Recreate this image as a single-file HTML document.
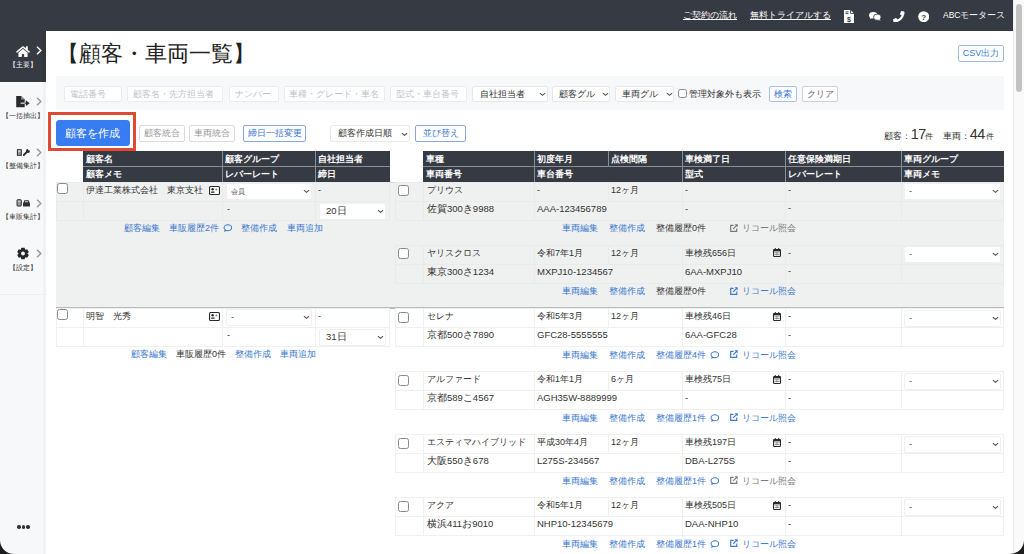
<!DOCTYPE html><html><head><meta charset="utf-8"><style>
html,body{margin:0;padding:0;width:1024px;height:554px;overflow:hidden;background:#fff;font-family:"Liberation Sans",sans-serif;}
#root{position:relative;width:1024px;height:554px;overflow:hidden}
</style></head><body><div id="root">
<div style="position:absolute;left:0px;top:0px;width:1013px;height:31px;background:#363a43"></div>
<div style="position:absolute;left:0px;top:31px;width:46px;height:50.5px;background:#363a43"></div>
<div style="position:absolute;left:42px;top:31px;width:4px;height:50.5px;background:#33373b"></div>
<div style="position:absolute;left:0px;top:81.5px;width:46px;height:473px;background:#f7f8fa"></div>
<div style="position:absolute;left:43px;top:81.5px;width:3px;height:473px;background:#f1f2f5"></div>
<div style="position:absolute;left:1013px;top:0px;width:11px;height:554px;background:#fafafa;border-left:1px solid #ececec;box-sizing:border-box"></div>
<div style="position:absolute;left:1016px;top:4px;width:6px;height:88px;background:#c2c2c2;border-radius:3px"></div>
<div style="position:absolute;left:683px;top:9.00px;height:13px;line-height:13px;font-size:9px;color:#fff;white-space:nowrap;text-decoration:underline">ご契約の流れ</div>
<div style="position:absolute;left:750px;top:9.00px;height:13px;line-height:13px;font-size:9px;color:#fff;white-space:nowrap;text-decoration:underline">無料トライアルする</div>
<svg style="position:absolute;left:844px;top:10px" width="10" height="13" viewBox="0 0 10 13"><path d="M0 0 H6.5 L10 3.5 V13 H0 Z" fill="#fff"/><path d="M6.5 0 V3.5 H10" fill="none" stroke="#363a43" stroke-width="0.8"/><rect x="1.5" y="1.5" width="3" height="0.9" fill="#363a43"/><rect x="1.5" y="3.2" width="3" height="0.9" fill="#363a43"/><text x="5" y="11.5" font-size="7" font-weight="bold" text-anchor="middle" fill="#363a43" font-family="Liberation Sans">$</text></svg>
<svg style="position:absolute;left:869px;top:12.2px" width="12" height="8.6" viewBox="0 0 13 9.3"><ellipse cx="4.6" cy="3.6" rx="4.5" ry="3.5" fill="#fff"/><path d="M1.5 5.5 L0.8 7.6 L3.5 6.6Z" fill="#fff"/><ellipse cx="9" cy="5.6" rx="4.1" ry="3.4" fill="#fff" stroke="#363a43" stroke-width="0.9"/><path d="M11 7.5 L12.8 9.2 L9.5 8.6Z" fill="#fff"/></svg>
<svg style="position:absolute;left:893px;top:10.8px" width="11.5" height="11.5" viewBox="0 0 512 512"><path fill="#fff" d="M497.4 361.8l-112-48a24 24 0 0 0-28 6.9l-49.6 60.6A370.7 370.7 0 0 1 130.6 204.1l60.6-49.6a23.9 23.9 0 0 0 6.9-28l-48-112A24.2 24.2 0 0 0 122.6.6l-104 24A24 24 0 0 0 0 48c0 256.5 207.9 464 464 464a24 24 0 0 0 23.4-18.6l24-104a24.3 24.3 0 0 0-14-27.6z" transform="translate(512,0) scale(-1,1)"/></svg>
<svg style="position:absolute;left:917.6px;top:10.6px" width="11.4" height="11.4" viewBox="0 0 12 12"><circle cx="6" cy="6" r="5.8" fill="#fff"/><text x="6" y="9" font-size="8.5" font-weight="bold" text-anchor="middle" fill="#363a43" font-family="Liberation Sans">?</text></svg>
<div style="position:absolute;left:943px;top:9.25px;height:12.5px;line-height:12.5px;font-size:8.5px;color:#fff;white-space:nowrap;">ABCモータース</div>
<svg style="position:absolute;left:16px;top:46px" width="14" height="11" viewBox="0 0 576 460"><path fill="#fff" d="M280.4 148.3L96 300.1V464a16 16 0 0 0 16 16l112.1-.3a16 16 0 0 0 15.9-16V368a16 16 0 0 1 16-16h64a16 16 0 0 1 16 16v95.6a16 16 0 0 0 16 16l112.1.3a16 16 0 0 0 16-16V300L295.7 148.3a12.2 12.2 0 0 0-15.3 0zM571.6 251.5L488 182.6V44.1a12 12 0 0 0-12-12h-56a12 12 0 0 0-12 12v72.6L318.5 43a48 48 0 0 0-61 0L4.3 251.5a12 12 0 0 0-1.6 16.9l25.5 31A12 12 0 0 0 45.2 301l235.2-193.7a12.2 12.2 0 0 1 15.3 0L530.9 301a12 12 0 0 0 16.9-1.6l25.5-31a12 12 0 0 0-1.7-16.9z" transform="translate(0,-20)"/></svg>
<svg style="position:absolute;left:36.3px;top:46.4px" width="6" height="9" viewBox="0 0 6 9"><path d="M1 0.8 L4.8 4.5 L1 8.2" fill="none" stroke="#fff" stroke-width="1.45"/></svg>
<div style="position:absolute;left:0;top:58.8px;width:46px;text-align:center;line-height:11px;font-size:7.3px;color:#fff;white-space:nowrap;letter-spacing:-0.1px">【主要】</div>
<svg style="position:absolute;left:12px;top:92px" width="20" height="18" viewBox="0 0 20 18"><path d="M4.2 3.9 H9.2 L12.7 7.4 V15.3 H4.2 Z" fill="#2a2a2a"/><path d="M9.2 3.9 V7.4 H12.7Z" fill="#999"/><rect x="8.6" y="10.6" width="4.4" height="1.1" fill="#f7f8fa"/><rect x="12.7" y="10.6" width="1.4" height="1.1" fill="#2a2a2a"/><path d="M13.8 8.3 L17.7 11.15 L13.8 14 Z" fill="#2a2a2a"/></svg>
<svg style="position:absolute;left:36.3px;top:97.4px" width="6" height="9" viewBox="0 0 6 9"><path d="M1 0.8 L4.8 4.5 L1 8.2" fill="none" stroke="#9a9a9a" stroke-width="1.45"/></svg>
<div style="position:absolute;left:0;top:109.8px;width:46px;text-align:center;line-height:11px;font-size:7.3px;color:#333;white-space:nowrap;letter-spacing:-0.1px">【一括抽出】</div>
<svg style="position:absolute;left:12px;top:144px" width="20" height="18" viewBox="0 0 20 18"><rect x="5.4" y="5.7" width="3.9" height="5.6" fill="#999" stroke="#2a2a2a" stroke-width="1"/><rect x="6.2" y="6.6" width="2.3" height="0.9" fill="#fff"/><path d="M11.8 11 L15.2 7.6" stroke="#2a2a2a" stroke-width="1.8" stroke-linecap="round"/><circle cx="15.9" cy="6.9" r="2" fill="#2a2a2a"/><circle cx="17" cy="5.6" r="1" fill="#f7f8fa"/></svg>
<svg style="position:absolute;left:36.3px;top:147.9px" width="6" height="9" viewBox="0 0 6 9"><path d="M1 0.8 L4.8 4.5 L1 8.2" fill="none" stroke="#9a9a9a" stroke-width="1.45"/></svg>
<div style="position:absolute;left:0;top:160.3px;width:46px;text-align:center;line-height:11px;font-size:7.3px;color:#333;white-space:nowrap;letter-spacing:-0.1px">【整備集計】</div>
<svg style="position:absolute;left:12px;top:195px" width="20" height="18" viewBox="0 0 20 18"><rect x="5" y="4.7" width="4.3" height="6.4" rx="0.6" fill="#999" stroke="#333" stroke-width="1"/><rect x="6" y="5.8" width="2.3" height="1" fill="#ddd"/><path d="M11 8.6 L12.4 5.3 H16.6 L18 8.6 V11.4 H11 Z" fill="#2f2f2f"/><rect x="12.9" y="6" width="3.2" height="1.4" fill="#aaa"/></svg>
<svg style="position:absolute;left:36.3px;top:198.9px" width="6" height="9" viewBox="0 0 6 9"><path d="M1 0.8 L4.8 4.5 L1 8.2" fill="none" stroke="#9a9a9a" stroke-width="1.45"/></svg>
<div style="position:absolute;left:0;top:211.3px;width:46px;text-align:center;line-height:11px;font-size:7.3px;color:#333;white-space:nowrap;letter-spacing:-0.1px">【車販集計】</div>
<svg style="position:absolute;left:12px;top:245px" width="20" height="18" viewBox="0 0 20 18"><path d="M9.35 2.73 L12.65 2.73 L13.20 4.69 L15.17 4.18 L16.82 7.05 L15.40 8.50 L16.82 9.95 L15.17 12.82 L13.20 12.31 L12.65 14.27 L9.35 14.27 L8.80 12.31 L6.83 12.82 L5.18 9.95 L6.60 8.50 L5.18 7.05 L6.83 4.18 L8.80 4.69 Z" fill="#262626"/><circle cx="11" cy="8.5" r="1.9" fill="#f7f8fa"/></svg>
<svg style="position:absolute;left:36.3px;top:249.4px" width="6" height="9" viewBox="0 0 6 9"><path d="M1 0.8 L4.8 4.5 L1 8.2" fill="none" stroke="#9a9a9a" stroke-width="1.45"/></svg>
<div style="position:absolute;left:0;top:261.8px;width:46px;text-align:center;line-height:11px;font-size:7.3px;color:#333;white-space:nowrap;letter-spacing:-0.1px">【設定】</div>
<div style="position:absolute;left:0px;top:293.5px;width:46px;height:1px;background:#eceef1"></div>
<div style="position:absolute;left:17.0px;top:525px;width:3.6px;height:3.6px;background:#333;border-radius:50%"></div>
<div style="position:absolute;left:21.5px;top:525px;width:3.6px;height:3.6px;background:#333;border-radius:50%"></div>
<div style="position:absolute;left:26.0px;top:525px;width:3.6px;height:3.6px;background:#333;border-radius:50%"></div>
<div style="position:absolute;left:57px;top:41.00px;height:26px;line-height:26px;font-size:22px;color:#222;white-space:nowrap;">【顧客・車両一覧】</div>
<div style="position:absolute;left:958px;top:45px;width:46px;height:16.5px;background:#fff;border:1px solid #9fbde3;box-sizing:border-box;border-radius:2px;text-align:center;line-height:14.5px;font-size:9px;color:#3b78cf;white-space:nowrap;">CSV出力</div>
<div style="position:absolute;left:56px;top:76px;width:948px;height:34px;background:#f7f8fa"></div>
<div style="position:absolute;left:64px;top:86px;width:58px;height:16px;background:#fff;border:1px solid #eaecef;box-sizing:border-box;border-radius:2px"><div style="position:absolute;left:4.5px;top:0;line-height:14px;font-size:9px;color:#bfc3c9;white-space:nowrap">電話番号</div></div>
<div style="position:absolute;left:127px;top:86px;width:96px;height:16px;background:#fff;border:1px solid #eaecef;box-sizing:border-box;border-radius:2px"><div style="position:absolute;left:4.5px;top:0;line-height:14px;font-size:9px;color:#bfc3c9;white-space:nowrap">顧客名・先方担当者</div></div>
<div style="position:absolute;left:229px;top:86px;width:50px;height:16px;background:#fff;border:1px solid #eaecef;box-sizing:border-box;border-radius:2px"><div style="position:absolute;left:4.5px;top:0;line-height:14px;font-size:9px;color:#bfc3c9;white-space:nowrap">ナンバー</div></div>
<div style="position:absolute;left:283.5px;top:86px;width:101.5px;height:16px;background:#fff;border:1px solid #eaecef;box-sizing:border-box;border-radius:2px"><div style="position:absolute;left:4.5px;top:0;line-height:14px;font-size:9px;color:#bfc3c9;white-space:nowrap">車種・グレード・車名</div></div>
<div style="position:absolute;left:390px;top:86px;width:77px;height:16px;background:#fff;border:1px solid #eaecef;box-sizing:border-box;border-radius:2px"><div style="position:absolute;left:4.5px;top:0;line-height:14px;font-size:9px;color:#bfc3c9;white-space:nowrap">型式・車台番号</div></div>
<div style="position:absolute;left:472px;top:86px;width:76px;height:16px;background:#fff;border:1px solid #e6e8eb;box-sizing:border-box;border-radius:2px"><div style="position:absolute;left:7px;top:0;line-height:14px;font-size:9px;color:#333;white-space:nowrap">自社担当者</div><svg style="position:absolute;left:65.5px;top:5.0px" width="7" height="4.5" viewBox="0 0 10 6"><path d="M1.3 1.3 L5 4.6 L8.7 1.3" fill="none" stroke="#555" stroke-width="1.6"/></svg></div>
<div style="position:absolute;left:552px;top:86px;width:58px;height:16px;background:#fff;border:1px solid #e6e8eb;box-sizing:border-box;border-radius:2px"><div style="position:absolute;left:6px;top:0;line-height:14px;font-size:9px;color:#333;white-space:nowrap">顧客グル</div><svg style="position:absolute;left:48.5px;top:5.0px" width="7" height="4.5" viewBox="0 0 10 6"><path d="M1.3 1.3 L5 4.6 L8.7 1.3" fill="none" stroke="#555" stroke-width="1.6"/></svg></div>
<div style="position:absolute;left:615px;top:86px;width:59px;height:16px;background:#fff;border:1px solid #e6e8eb;box-sizing:border-box;border-radius:2px"><div style="position:absolute;left:6px;top:0;line-height:14px;font-size:9px;color:#333;white-space:nowrap">車両グル</div><svg style="position:absolute;left:49.5px;top:5.0px" width="7" height="4.5" viewBox="0 0 10 6"><path d="M1.3 1.3 L5 4.6 L8.7 1.3" fill="none" stroke="#555" stroke-width="1.6"/></svg></div>
<div style="position:absolute;left:678px;top:89px;width:9px;height:9px;background:#fff;border:1px solid #8a8a8a;box-sizing:border-box;border-radius:2.5px"></div>
<div style="position:absolute;left:689px;top:87.50px;height:13px;line-height:13px;font-size:9px;color:#333;white-space:nowrap;">管理対象外も表示</div>
<div style="position:absolute;left:769px;top:86px;width:28px;height:16px;background:#fff;border:1px solid #a9c3e6;box-sizing:border-box;border-radius:2px;text-align:center;line-height:14px;font-size:9px;color:#3b78cf;white-space:nowrap;">検索</div>
<div style="position:absolute;left:802px;top:86px;width:36px;height:16px;background:#fff;border:1px solid #cfd2d6;box-sizing:border-box;border-radius:2px;text-align:center;line-height:14px;font-size:9px;color:#666;white-space:nowrap;">クリア</div>
<div style="position:absolute;left:48px;top:112px;width:87.5px;height:39px;border:3.3px solid #de4a32;box-sizing:border-box"></div>
<div style="position:absolute;left:56px;top:120px;width:74px;height:26px;background:#377cf1;border:1px solid #377cf1;box-sizing:border-box;border-radius:2px;text-align:center;line-height:24px;font-size:11.3px;color:#fff;white-space:nowrap;border-radius:3px;text-indent:-1px">顧客を作成</div>
<div style="position:absolute;left:139px;top:125px;width:46px;height:17px;background:#fff;border:1px solid #d8dadd;box-sizing:border-box;border-radius:2px;text-align:center;line-height:15px;font-size:9px;color:#999;white-space:nowrap;">顧客統合</div>
<div style="position:absolute;left:189px;top:125px;width:46px;height:17px;background:#fff;border:1px solid #d8dadd;box-sizing:border-box;border-radius:2px;text-align:center;line-height:15px;font-size:9px;color:#999;white-space:nowrap;">車両統合</div>
<div style="position:absolute;left:243px;top:125px;width:63px;height:17px;background:#fff;border:1px solid #86a8d8;box-sizing:border-box;border-radius:2px;text-align:center;line-height:15px;font-size:9px;color:#3b78cf;white-space:nowrap;">締日一括変更</div>
<div style="position:absolute;left:330px;top:125px;width:80px;height:17px;background:#fff;border:1px solid #e6e8eb;box-sizing:border-box;border-radius:2px"><div style="position:absolute;left:7px;top:0;line-height:15px;font-size:9px;color:#333;white-space:nowrap">顧客作成日順</div><svg style="position:absolute;left:70px;top:5.5px" width="7" height="4.5" viewBox="0 0 10 6"><path d="M1.3 1.3 L5 4.6 L8.7 1.3" fill="none" stroke="#555" stroke-width="1.6"/></svg></div>
<div style="position:absolute;left:415px;top:125px;width:51px;height:17px;background:#fff;border:1px solid #86a8d8;box-sizing:border-box;border-radius:2px;text-align:center;line-height:15px;font-size:9px;color:#3b78cf;white-space:nowrap;">並び替え</div>
<div style="position:absolute;left:884px;top:126.4px;line-height:16px;font-size:9px;color:#333;white-space:nowrap"><span style="display:inline-block;width:26.8px">顧客：</span><span style="display:inline-block;width:14.6px;font-size:14.4px;letter-spacing:-0.6px">17</span><span style="display:inline-block;width:17.6px;font-size:8.3px">件</span><span style="display:inline-block;width:26.8px">車両：</span><span style="display:inline-block;width:16px;font-size:14.4px;letter-spacing:-0.6px">44</span><span style="display:inline-block;font-size:8.3px">件</span></div>
<div style="position:absolute;left:83px;top:151px;width:307px;height:31px;background:#363a43"></div>
<div style="position:absolute;left:83px;top:166px;width:307px;height:1px;background:#8b8f95"></div>
<div style="position:absolute;left:86px;top:152.90px;height:13px;line-height:13px;font-size:9px;color:#fff;white-space:nowrap;font-weight:bold">顧客名</div>
<div style="position:absolute;left:225px;top:152.90px;height:13px;line-height:13px;font-size:9px;color:#fff;white-space:nowrap;font-weight:bold">顧客グループ</div>
<div style="position:absolute;left:318px;top:152.90px;height:13px;line-height:13px;font-size:9px;color:#fff;white-space:nowrap;font-weight:bold">自社担当者</div>
<div style="position:absolute;left:86px;top:168.20px;height:13px;line-height:13px;font-size:9px;color:#fff;white-space:nowrap;font-weight:bold">顧客メモ</div>
<div style="position:absolute;left:225px;top:168.20px;height:13px;line-height:13px;font-size:9px;color:#fff;white-space:nowrap;font-weight:bold">レバーレート</div>
<div style="position:absolute;left:318px;top:168.20px;height:13px;line-height:13px;font-size:9px;color:#fff;white-space:nowrap;font-weight:bold">締日</div>
<div style="position:absolute;left:222px;top:151px;width:1px;height:31px;background:#8a8d92"></div>
<div style="position:absolute;left:315px;top:151px;width:1px;height:31px;background:#8a8d92"></div>
<div style="position:absolute;left:423px;top:151px;width:580.5px;height:31px;background:#363a43"></div>
<div style="position:absolute;left:423px;top:166px;width:580.5px;height:1px;background:#8b8f95"></div>
<div style="position:absolute;left:426px;top:152.90px;height:13px;line-height:13px;font-size:9px;color:#fff;white-space:nowrap;font-weight:bold">車種</div>
<div style="position:absolute;left:537px;top:152.90px;height:13px;line-height:13px;font-size:9px;color:#fff;white-space:nowrap;font-weight:bold">初度年月</div>
<div style="position:absolute;left:611px;top:152.90px;height:13px;line-height:13px;font-size:9px;color:#fff;white-space:nowrap;font-weight:bold">点検間隔</div>
<div style="position:absolute;left:685px;top:152.90px;height:13px;line-height:13px;font-size:9px;color:#fff;white-space:nowrap;font-weight:bold">車検満了日</div>
<div style="position:absolute;left:788px;top:152.90px;height:13px;line-height:13px;font-size:9px;color:#fff;white-space:nowrap;font-weight:bold">任意保険満期日</div>
<div style="position:absolute;left:904px;top:152.90px;height:13px;line-height:13px;font-size:9px;color:#fff;white-space:nowrap;font-weight:bold">車両グループ</div>
<div style="position:absolute;left:426px;top:168.20px;height:13px;line-height:13px;font-size:9px;color:#fff;white-space:nowrap;font-weight:bold">車両番号</div>
<div style="position:absolute;left:537px;top:168.20px;height:13px;line-height:13px;font-size:9px;color:#fff;white-space:nowrap;font-weight:bold">車台番号</div>
<div style="position:absolute;left:685px;top:168.20px;height:13px;line-height:13px;font-size:9px;color:#fff;white-space:nowrap;font-weight:bold">型式</div>
<div style="position:absolute;left:788px;top:168.20px;height:13px;line-height:13px;font-size:9px;color:#fff;white-space:nowrap;font-weight:bold">レバーレート</div>
<div style="position:absolute;left:904px;top:168.20px;height:13px;line-height:13px;font-size:9px;color:#fff;white-space:nowrap;font-weight:bold">車両メモ</div>
<div style="position:absolute;left:534px;top:151px;width:1px;height:31px;background:#8a8d92"></div>
<div style="position:absolute;left:608px;top:151px;width:1px;height:15px;background:#8a8d92"></div>
<div style="position:absolute;left:682px;top:151px;width:1px;height:31px;background:#8a8d92"></div>
<div style="position:absolute;left:785px;top:151px;width:1px;height:31px;background:#8a8d92"></div>
<div style="position:absolute;left:901px;top:151px;width:1px;height:31px;background:#8a8d92"></div>
<div style="position:absolute;left:56px;top:182px;width:947.5px;height:126px;background:#eff0f0"></div>
<div style="position:absolute;left:56px;top:307px;width:947.5px;height:1.5px;background:#b8babc"></div>
<div style="position:absolute;left:56px;top:182px;width:947.5px;height:1px;background:#d4d6d8"></div>
<div style="position:absolute;left:56px;top:182px;width:334px;height:1px;background:#e8eaeb"></div>
<div style="position:absolute;left:56px;top:201px;width:334px;height:1px;background:#e8eaeb"></div>
<div style="position:absolute;left:56px;top:220px;width:334px;height:1px;background:#e8eaeb"></div>
<div style="position:absolute;left:56px;top:182px;width:1px;height:38px;background:#e8eaeb"></div>
<div style="position:absolute;left:83px;top:182px;width:1px;height:38px;background:#e8eaeb"></div>
<div style="position:absolute;left:222px;top:182px;width:1px;height:38px;background:#e8eaeb"></div>
<div style="position:absolute;left:315px;top:182px;width:1px;height:38px;background:#e8eaeb"></div>
<div style="position:absolute;left:389px;top:182px;width:1px;height:38px;background:#e8eaeb"></div>
<div style="position:absolute;left:57px;top:182.8px;width:11px;height:11px;background:#fff;border:1px solid #8a8a8a;box-sizing:border-box;border-radius:2.5px"></div>
<div style="position:absolute;left:86px;top:183.50px;height:13px;line-height:13px;font-size:9px;color:#333;white-space:nowrap;">伊達工業株式会社　東京支社</div>
<svg style="position:absolute;left:209px;top:186px" width="11" height="9" viewBox="0 0 11 9"><rect x="0.55" y="0.55" width="9.9" height="7.9" rx="1" fill="#fff" stroke="#2a2a2a" stroke-width="1.1"/><circle cx="3.6" cy="3.3" r="1.2" fill="#2a2a2a"/><rect x="2" y="5.6" width="3.6" height="1.1" rx="0.5" fill="#2a2a2a"/><circle cx="7.4" cy="3.6" r="1" fill="#888"/></svg>
<div style="position:absolute;left:226px;top:183px;width:86px;height:17px;background:#fff;border:1px solid #f0f0f0;box-sizing:border-box;border-radius:2px"><div style="position:absolute;left:4px;top:0;line-height:15px;font-size:7px;color:#555;white-space:nowrap">会員</div><svg style="position:absolute;left:76px;top:5.0px" width="7" height="4.5" viewBox="0 0 10 6"><path d="M1.3 1.3 L5 4.6 L8.7 1.3" fill="none" stroke="#555" stroke-width="1.6"/></svg></div>
<div style="position:absolute;left:318px;top:183.50px;height:13px;line-height:13px;font-size:9px;color:#333;white-space:nowrap;">-</div>
<div style="position:absolute;left:227px;top:202.50px;height:13px;line-height:13px;font-size:9px;color:#333;white-space:nowrap;">-</div>
<div style="position:absolute;left:319px;top:203px;width:67px;height:16.5px;background:#fff;border:1px solid #f0f0f0;box-sizing:border-box;border-radius:2px"><div style="position:absolute;left:6px;top:0;line-height:14.5px;font-size:9.5px;color:#333;white-space:nowrap">20日</div><svg style="position:absolute;left:57px;top:4.75px" width="7" height="4.5" viewBox="0 0 10 6"><path d="M1.3 1.3 L5 4.6 L8.7 1.3" fill="none" stroke="#555" stroke-width="1.6"/></svg></div>
<div style="position:absolute;left:124px;top:221.80px;height:13px;line-height:13px;font-size:9px;color:#3b78cf;white-space:nowrap;">顧客編集</div>
<div style="position:absolute;left:169px;top:221.80px;height:13px;line-height:13px;font-size:9px;color:#3b78cf;white-space:nowrap;">車販履歴2件</div>
<svg style="position:absolute;left:222.5px;top:224.0px" width="9.4" height="8.4" viewBox="0 0 10 9"><ellipse cx="5.2" cy="4" rx="4.1" ry="3.2" fill="none" stroke="#3b78cf" stroke-width="1.1"/><path d="M2 6 L1.2 8.6 L4 7.2" fill="#3b78cf"/></svg>
<div style="position:absolute;left:241px;top:221.80px;height:13px;line-height:13px;font-size:9px;color:#3b78cf;white-space:nowrap;">整備作成</div>
<div style="position:absolute;left:286.5px;top:221.80px;height:13px;line-height:13px;font-size:9px;color:#3b78cf;white-space:nowrap;">車両追加</div>
<div style="position:absolute;left:56px;top:308px;width:334px;height:1px;background:#f0f0f0"></div>
<div style="position:absolute;left:56px;top:327px;width:334px;height:1px;background:#f0f0f0"></div>
<div style="position:absolute;left:56px;top:346px;width:334px;height:1px;background:#f0f0f0"></div>
<div style="position:absolute;left:56px;top:308px;width:1px;height:38px;background:#f0f0f0"></div>
<div style="position:absolute;left:83px;top:308px;width:1px;height:38px;background:#f0f0f0"></div>
<div style="position:absolute;left:222px;top:308px;width:1px;height:38px;background:#f0f0f0"></div>
<div style="position:absolute;left:315px;top:308px;width:1px;height:38px;background:#f0f0f0"></div>
<div style="position:absolute;left:389px;top:308px;width:1px;height:38px;background:#f0f0f0"></div>
<div style="position:absolute;left:57px;top:308.8px;width:11px;height:11px;background:#fff;border:1px solid #8a8a8a;box-sizing:border-box;border-radius:2.5px"></div>
<div style="position:absolute;left:86px;top:309.50px;height:13px;line-height:13px;font-size:9px;color:#333;white-space:nowrap;">明智　光秀</div>
<svg style="position:absolute;left:209px;top:312px" width="11" height="9" viewBox="0 0 11 9"><rect x="0.55" y="0.55" width="9.9" height="7.9" rx="1" fill="#fff" stroke="#2a2a2a" stroke-width="1.1"/><circle cx="3.6" cy="3.3" r="1.2" fill="#2a2a2a"/><rect x="2" y="5.6" width="3.6" height="1.1" rx="0.5" fill="#2a2a2a"/><circle cx="7.4" cy="3.6" r="1" fill="#888"/></svg>
<div style="position:absolute;left:226px;top:309px;width:86px;height:17px;background:#fff;border:1px solid #f0f0f0;box-sizing:border-box;border-radius:2px"><div style="position:absolute;left:4px;top:0;line-height:15px;font-size:9px;color:#555;white-space:nowrap">-</div><svg style="position:absolute;left:76px;top:5.0px" width="7" height="4.5" viewBox="0 0 10 6"><path d="M1.3 1.3 L5 4.6 L8.7 1.3" fill="none" stroke="#555" stroke-width="1.6"/></svg></div>
<div style="position:absolute;left:318px;top:309.50px;height:13px;line-height:13px;font-size:9px;color:#333;white-space:nowrap;">-</div>
<div style="position:absolute;left:227px;top:328.50px;height:13px;line-height:13px;font-size:9px;color:#333;white-space:nowrap;">-</div>
<div style="position:absolute;left:319px;top:329px;width:67px;height:16.5px;background:#fff;border:1px solid #f0f0f0;box-sizing:border-box;border-radius:2px"><div style="position:absolute;left:6px;top:0;line-height:14.5px;font-size:9.5px;color:#333;white-space:nowrap">31日</div><svg style="position:absolute;left:57px;top:4.75px" width="7" height="4.5" viewBox="0 0 10 6"><path d="M1.3 1.3 L5 4.6 L8.7 1.3" fill="none" stroke="#555" stroke-width="1.6"/></svg></div>
<div style="position:absolute;left:130.5px;top:348.10px;height:13px;line-height:13px;font-size:9px;color:#3b78cf;white-space:nowrap;">顧客編集</div>
<div style="position:absolute;left:176px;top:348.10px;height:13px;line-height:13px;font-size:9px;color:#333;white-space:nowrap;">車販履歴0件</div>
<div style="position:absolute;left:235px;top:348.10px;height:13px;line-height:13px;font-size:9px;color:#3b78cf;white-space:nowrap;">整備作成</div>
<div style="position:absolute;left:280px;top:348.10px;height:13px;line-height:13px;font-size:9px;color:#3b78cf;white-space:nowrap;">車両追加</div>
<div style="position:absolute;left:395px;top:200.5px;width:608.5px;height:1px;background:#e8eaeb"></div>
<div style="position:absolute;left:395px;top:220px;width:608.5px;height:1px;background:#e8eaeb"></div>
<div style="position:absolute;left:395px;top:182px;width:608.5px;height:1px;background:#e8eaeb"></div>
<div style="position:absolute;left:395px;top:182px;width:1px;height:38px;background:#e8eaeb"></div>
<div style="position:absolute;left:423px;top:182px;width:1px;height:38px;background:#e8eaeb"></div>
<div style="position:absolute;left:534px;top:182px;width:1px;height:38px;background:#e8eaeb"></div>
<div style="position:absolute;left:682px;top:182px;width:1px;height:38px;background:#e8eaeb"></div>
<div style="position:absolute;left:785px;top:182px;width:1px;height:38px;background:#e8eaeb"></div>
<div style="position:absolute;left:901px;top:182px;width:1px;height:38px;background:#e8eaeb"></div>
<div style="position:absolute;left:1002.5px;top:182px;width:1px;height:38px;background:#e8eaeb"></div>
<div style="position:absolute;left:608px;top:182px;width:1px;height:18.5px;background:#e8eaeb"></div>
<div style="position:absolute;left:398px;top:185px;width:11px;height:11px;background:#fff;border:1px solid #8a8a8a;box-sizing:border-box;border-radius:2.5px"></div>
<div style="position:absolute;left:427px;top:183.50px;height:13px;line-height:13px;font-size:9px;color:#333;white-space:nowrap;">プリウス</div>
<div style="position:absolute;left:537px;top:183.50px;height:13px;line-height:13px;font-size:9px;color:#333;white-space:nowrap;">-</div>
<div style="position:absolute;left:611px;top:183.50px;height:13px;line-height:13px;font-size:9px;color:#333;white-space:nowrap;">12ヶ月</div>
<div style="position:absolute;left:685px;top:183.50px;height:13px;line-height:13px;font-size:9px;color:#333;white-space:nowrap;">-</div>
<div style="position:absolute;left:788px;top:183.50px;height:13px;line-height:13px;font-size:9px;color:#333;white-space:nowrap;">-</div>
<div style="position:absolute;left:904px;top:183.2px;width:97px;height:17px;background:#fff;border:1px solid #f0f0f0;box-sizing:border-box;border-radius:2px"><div style="position:absolute;left:4px;top:0;line-height:15px;font-size:9px;color:#555;white-space:nowrap">-</div><svg style="position:absolute;left:87px;top:5.0px" width="7" height="4.5" viewBox="0 0 10 6"><path d="M1.3 1.3 L5 4.6 L8.7 1.3" fill="none" stroke="#555" stroke-width="1.6"/></svg></div>
<div style="position:absolute;left:427px;top:201.95px;height:13.5px;line-height:13.5px;font-size:9.5px;color:#333;white-space:nowrap;">佐賀300き9988</div>
<div style="position:absolute;left:537px;top:201.95px;height:13.5px;line-height:13.5px;font-size:9.5px;color:#333;white-space:nowrap;">AAA-123456789</div>
<div style="position:absolute;left:685px;top:201.95px;height:13.5px;line-height:13.5px;font-size:9.5px;color:#333;white-space:nowrap;">-</div>
<div style="position:absolute;left:788px;top:202.20px;height:13px;line-height:13px;font-size:9px;color:#333;white-space:nowrap;">-</div>
<div style="position:absolute;left:562px;top:222.30px;height:13px;line-height:13px;font-size:9px;color:#3b78cf;white-space:nowrap;">車両編集</div>
<div style="position:absolute;left:609px;top:222.30px;height:13px;line-height:13px;font-size:9px;color:#3b78cf;white-space:nowrap;">整備作成</div>
<div style="position:absolute;left:656px;top:222.30px;height:13px;line-height:13px;font-size:9px;color:#333;white-space:nowrap;">整備履歴0件</div>
<svg style="position:absolute;left:730px;top:223.9px" width="8" height="8" viewBox="0 0 9 9"><path d="M7.6 5.2 V8.3 H0.8 V1.5 H4" fill="none" stroke="#777" stroke-width="1.3"/><path d="M5.2 0.4 H8.6 V3.8Z" fill="#777"/><path d="M8 1 L3.6 5.4" fill="none" stroke="#777" stroke-width="1.3"/></svg>
<div style="position:absolute;left:741.5px;top:222.40px;height:12.8px;line-height:12.8px;font-size:8.8px;color:#777;white-space:nowrap;">リコール照会</div>
<div style="position:absolute;left:395px;top:263.5px;width:608.5px;height:1px;background:#e8eaeb"></div>
<div style="position:absolute;left:395px;top:283px;width:608.5px;height:1px;background:#e8eaeb"></div>
<div style="position:absolute;left:395px;top:245px;width:608.5px;height:1px;background:#e8eaeb"></div>
<div style="position:absolute;left:395px;top:245px;width:1px;height:38px;background:#e8eaeb"></div>
<div style="position:absolute;left:423px;top:245px;width:1px;height:38px;background:#e8eaeb"></div>
<div style="position:absolute;left:534px;top:245px;width:1px;height:38px;background:#e8eaeb"></div>
<div style="position:absolute;left:682px;top:245px;width:1px;height:38px;background:#e8eaeb"></div>
<div style="position:absolute;left:785px;top:245px;width:1px;height:38px;background:#e8eaeb"></div>
<div style="position:absolute;left:901px;top:245px;width:1px;height:38px;background:#e8eaeb"></div>
<div style="position:absolute;left:1002.5px;top:245px;width:1px;height:38px;background:#e8eaeb"></div>
<div style="position:absolute;left:608px;top:245px;width:1px;height:18.5px;background:#e8eaeb"></div>
<div style="position:absolute;left:398px;top:248px;width:11px;height:11px;background:#fff;border:1px solid #8a8a8a;box-sizing:border-box;border-radius:2.5px"></div>
<div style="position:absolute;left:427px;top:246.50px;height:13px;line-height:13px;font-size:9px;color:#333;white-space:nowrap;">ヤリスクロス</div>
<div style="position:absolute;left:537px;top:246.50px;height:13px;line-height:13px;font-size:9px;color:#333;white-space:nowrap;">令和7年1月</div>
<div style="position:absolute;left:611px;top:246.50px;height:13px;line-height:13px;font-size:9px;color:#333;white-space:nowrap;">12ヶ月</div>
<div style="position:absolute;left:685px;top:246.50px;height:13px;line-height:13px;font-size:9px;color:#333;white-space:nowrap;">車検残656日</div>
<svg style="position:absolute;left:773px;top:248px" width="8" height="9" viewBox="0 0 8 9"><rect x="0.55" y="1.55" width="6.9" height="6.9" rx="0.8" fill="none" stroke="#2a2a2a" stroke-width="1.1"/><rect x="0.55" y="1.55" width="6.9" height="1.8" fill="#2a2a2a"/><rect x="1.8" y="0" width="1" height="2" fill="#2a2a2a"/><rect x="5.2" y="0" width="1" height="2" fill="#2a2a2a"/><rect x="1.6" y="4.5" width="4.8" height="0.7" fill="#777"/><rect x="1.6" y="6.2" width="4.8" height="0.7" fill="#777"/><rect x="3.6" y="4" width="0.7" height="3.5" fill="#777"/></svg>
<div style="position:absolute;left:788px;top:246.50px;height:13px;line-height:13px;font-size:9px;color:#333;white-space:nowrap;">-</div>
<div style="position:absolute;left:904px;top:246.2px;width:97px;height:17px;background:#fff;border:1px solid #f0f0f0;box-sizing:border-box;border-radius:2px"><div style="position:absolute;left:4px;top:0;line-height:15px;font-size:9px;color:#555;white-space:nowrap">-</div><svg style="position:absolute;left:87px;top:5.0px" width="7" height="4.5" viewBox="0 0 10 6"><path d="M1.3 1.3 L5 4.6 L8.7 1.3" fill="none" stroke="#555" stroke-width="1.6"/></svg></div>
<div style="position:absolute;left:427px;top:264.95px;height:13.5px;line-height:13.5px;font-size:9.5px;color:#333;white-space:nowrap;">東京300さ1234</div>
<div style="position:absolute;left:537px;top:264.95px;height:13.5px;line-height:13.5px;font-size:9.5px;color:#333;white-space:nowrap;">MXPJ10-1234567</div>
<div style="position:absolute;left:685px;top:264.95px;height:13.5px;line-height:13.5px;font-size:9.5px;color:#333;white-space:nowrap;">6AA-MXPJ10</div>
<div style="position:absolute;left:788px;top:265.20px;height:13px;line-height:13px;font-size:9px;color:#333;white-space:nowrap;">-</div>
<div style="position:absolute;left:562px;top:285.30px;height:13px;line-height:13px;font-size:9px;color:#3b78cf;white-space:nowrap;">車両編集</div>
<div style="position:absolute;left:609px;top:285.30px;height:13px;line-height:13px;font-size:9px;color:#3b78cf;white-space:nowrap;">整備作成</div>
<div style="position:absolute;left:656px;top:285.30px;height:13px;line-height:13px;font-size:9px;color:#333;white-space:nowrap;">整備履歴0件</div>
<svg style="position:absolute;left:730px;top:286.90000000000003px" width="8" height="8" viewBox="0 0 9 9"><path d="M7.6 5.2 V8.3 H0.8 V1.5 H4" fill="none" stroke="#3b78cf" stroke-width="1.3"/><path d="M5.2 0.4 H8.6 V3.8Z" fill="#3b78cf"/><path d="M8 1 L3.6 5.4" fill="none" stroke="#3b78cf" stroke-width="1.3"/></svg>
<div style="position:absolute;left:741.5px;top:285.40px;height:12.8px;line-height:12.8px;font-size:8.8px;color:#3b78cf;white-space:nowrap;">リコール照会</div>
<div style="position:absolute;left:395px;top:326.5px;width:608.5px;height:1px;background:#f0f0f0"></div>
<div style="position:absolute;left:395px;top:346px;width:608.5px;height:1px;background:#f0f0f0"></div>
<div style="position:absolute;left:395px;top:308px;width:608.5px;height:1px;background:#f0f0f0"></div>
<div style="position:absolute;left:395px;top:308px;width:1px;height:38px;background:#f0f0f0"></div>
<div style="position:absolute;left:423px;top:308px;width:1px;height:38px;background:#f0f0f0"></div>
<div style="position:absolute;left:534px;top:308px;width:1px;height:38px;background:#f0f0f0"></div>
<div style="position:absolute;left:682px;top:308px;width:1px;height:38px;background:#f0f0f0"></div>
<div style="position:absolute;left:785px;top:308px;width:1px;height:38px;background:#f0f0f0"></div>
<div style="position:absolute;left:901px;top:308px;width:1px;height:38px;background:#f0f0f0"></div>
<div style="position:absolute;left:1002.5px;top:308px;width:1px;height:38px;background:#f0f0f0"></div>
<div style="position:absolute;left:608px;top:308px;width:1px;height:18.5px;background:#f0f0f0"></div>
<div style="position:absolute;left:398px;top:311.5px;width:11px;height:11px;background:#fff;border:1px solid #8a8a8a;box-sizing:border-box;border-radius:2.5px"></div>
<div style="position:absolute;left:427px;top:310.00px;height:13px;line-height:13px;font-size:9px;color:#333;white-space:nowrap;">セレナ</div>
<div style="position:absolute;left:537px;top:310.00px;height:13px;line-height:13px;font-size:9px;color:#333;white-space:nowrap;">令和5年3月</div>
<div style="position:absolute;left:611px;top:310.00px;height:13px;line-height:13px;font-size:9px;color:#333;white-space:nowrap;">12ヶ月</div>
<div style="position:absolute;left:685px;top:310.00px;height:13px;line-height:13px;font-size:9px;color:#333;white-space:nowrap;">車検残46日</div>
<svg style="position:absolute;left:773px;top:311.5px" width="8" height="9" viewBox="0 0 8 9"><rect x="0.55" y="1.55" width="6.9" height="6.9" rx="0.8" fill="none" stroke="#2a2a2a" stroke-width="1.1"/><rect x="0.55" y="1.55" width="6.9" height="1.8" fill="#2a2a2a"/><rect x="1.8" y="0" width="1" height="2" fill="#2a2a2a"/><rect x="5.2" y="0" width="1" height="2" fill="#2a2a2a"/><rect x="1.6" y="4.5" width="4.8" height="0.7" fill="#777"/><rect x="1.6" y="6.2" width="4.8" height="0.7" fill="#777"/><rect x="3.6" y="4" width="0.7" height="3.5" fill="#777"/></svg>
<div style="position:absolute;left:788px;top:310.00px;height:13px;line-height:13px;font-size:9px;color:#333;white-space:nowrap;">-</div>
<div style="position:absolute;left:904px;top:309.7px;width:97px;height:17px;background:#fff;border:1px solid #f0f0f0;box-sizing:border-box;border-radius:2px"><div style="position:absolute;left:4px;top:0;line-height:15px;font-size:9px;color:#555;white-space:nowrap">-</div><svg style="position:absolute;left:87px;top:5.0px" width="7" height="4.5" viewBox="0 0 10 6"><path d="M1.3 1.3 L5 4.6 L8.7 1.3" fill="none" stroke="#555" stroke-width="1.6"/></svg></div>
<div style="position:absolute;left:427px;top:328.45px;height:13.5px;line-height:13.5px;font-size:9.5px;color:#333;white-space:nowrap;">京都500さ7890</div>
<div style="position:absolute;left:537px;top:328.45px;height:13.5px;line-height:13.5px;font-size:9.5px;color:#333;white-space:nowrap;">GFC28-5555555</div>
<div style="position:absolute;left:685px;top:328.45px;height:13.5px;line-height:13.5px;font-size:9.5px;color:#333;white-space:nowrap;">6AA-GFC28</div>
<div style="position:absolute;left:788px;top:328.70px;height:13px;line-height:13px;font-size:9px;color:#333;white-space:nowrap;">-</div>
<div style="position:absolute;left:562px;top:348.80px;height:13px;line-height:13px;font-size:9px;color:#3b78cf;white-space:nowrap;">車両編集</div>
<div style="position:absolute;left:609px;top:348.80px;height:13px;line-height:13px;font-size:9px;color:#3b78cf;white-space:nowrap;">整備作成</div>
<div style="position:absolute;left:656px;top:348.80px;height:13px;line-height:13px;font-size:9px;color:#3b78cf;white-space:nowrap;">整備履歴4件</div>
<svg style="position:absolute;left:710px;top:351.0px" width="9.4" height="8.4" viewBox="0 0 10 9"><ellipse cx="5.2" cy="4" rx="4.1" ry="3.2" fill="none" stroke="#3b78cf" stroke-width="1.1"/><path d="M2 6 L1.2 8.6 L4 7.2" fill="#3b78cf"/></svg>
<svg style="position:absolute;left:730px;top:350.40000000000003px" width="8" height="8" viewBox="0 0 9 9"><path d="M7.6 5.2 V8.3 H0.8 V1.5 H4" fill="none" stroke="#3b78cf" stroke-width="1.3"/><path d="M5.2 0.4 H8.6 V3.8Z" fill="#3b78cf"/><path d="M8 1 L3.6 5.4" fill="none" stroke="#3b78cf" stroke-width="1.3"/></svg>
<div style="position:absolute;left:741.5px;top:348.90px;height:12.8px;line-height:12.8px;font-size:8.8px;color:#3b78cf;white-space:nowrap;">リコール照会</div>
<div style="position:absolute;left:395px;top:389.5px;width:608.5px;height:1px;background:#f0f0f0"></div>
<div style="position:absolute;left:395px;top:409px;width:608.5px;height:1px;background:#f0f0f0"></div>
<div style="position:absolute;left:395px;top:371px;width:608.5px;height:1px;background:#f0f0f0"></div>
<div style="position:absolute;left:395px;top:371px;width:1px;height:38px;background:#f0f0f0"></div>
<div style="position:absolute;left:423px;top:371px;width:1px;height:38px;background:#f0f0f0"></div>
<div style="position:absolute;left:534px;top:371px;width:1px;height:38px;background:#f0f0f0"></div>
<div style="position:absolute;left:682px;top:371px;width:1px;height:38px;background:#f0f0f0"></div>
<div style="position:absolute;left:785px;top:371px;width:1px;height:38px;background:#f0f0f0"></div>
<div style="position:absolute;left:901px;top:371px;width:1px;height:38px;background:#f0f0f0"></div>
<div style="position:absolute;left:1002.5px;top:371px;width:1px;height:38px;background:#f0f0f0"></div>
<div style="position:absolute;left:608px;top:371px;width:1px;height:18.5px;background:#f0f0f0"></div>
<div style="position:absolute;left:398px;top:374.5px;width:11px;height:11px;background:#fff;border:1px solid #8a8a8a;box-sizing:border-box;border-radius:2.5px"></div>
<div style="position:absolute;left:427px;top:373.00px;height:13px;line-height:13px;font-size:9px;color:#333;white-space:nowrap;">アルファード</div>
<div style="position:absolute;left:537px;top:373.00px;height:13px;line-height:13px;font-size:9px;color:#333;white-space:nowrap;">令和1年1月</div>
<div style="position:absolute;left:611px;top:373.00px;height:13px;line-height:13px;font-size:9px;color:#333;white-space:nowrap;">6ヶ月</div>
<div style="position:absolute;left:685px;top:373.00px;height:13px;line-height:13px;font-size:9px;color:#333;white-space:nowrap;">車検残75日</div>
<svg style="position:absolute;left:773px;top:374.5px" width="8" height="9" viewBox="0 0 8 9"><rect x="0.55" y="1.55" width="6.9" height="6.9" rx="0.8" fill="none" stroke="#2a2a2a" stroke-width="1.1"/><rect x="0.55" y="1.55" width="6.9" height="1.8" fill="#2a2a2a"/><rect x="1.8" y="0" width="1" height="2" fill="#2a2a2a"/><rect x="5.2" y="0" width="1" height="2" fill="#2a2a2a"/><rect x="1.6" y="4.5" width="4.8" height="0.7" fill="#777"/><rect x="1.6" y="6.2" width="4.8" height="0.7" fill="#777"/><rect x="3.6" y="4" width="0.7" height="3.5" fill="#777"/></svg>
<div style="position:absolute;left:788px;top:373.00px;height:13px;line-height:13px;font-size:9px;color:#333;white-space:nowrap;">-</div>
<div style="position:absolute;left:904px;top:372.7px;width:97px;height:17px;background:#fff;border:1px solid #f0f0f0;box-sizing:border-box;border-radius:2px"><div style="position:absolute;left:4px;top:0;line-height:15px;font-size:9px;color:#555;white-space:nowrap">-</div><svg style="position:absolute;left:87px;top:5.0px" width="7" height="4.5" viewBox="0 0 10 6"><path d="M1.3 1.3 L5 4.6 L8.7 1.3" fill="none" stroke="#555" stroke-width="1.6"/></svg></div>
<div style="position:absolute;left:427px;top:391.45px;height:13.5px;line-height:13.5px;font-size:9.5px;color:#333;white-space:nowrap;">京都589こ4567</div>
<div style="position:absolute;left:537px;top:391.45px;height:13.5px;line-height:13.5px;font-size:9.5px;color:#333;white-space:nowrap;">AGH35W-8889999</div>
<div style="position:absolute;left:685px;top:391.45px;height:13.5px;line-height:13.5px;font-size:9.5px;color:#333;white-space:nowrap;">-</div>
<div style="position:absolute;left:788px;top:391.70px;height:13px;line-height:13px;font-size:9px;color:#333;white-space:nowrap;">-</div>
<div style="position:absolute;left:562px;top:411.80px;height:13px;line-height:13px;font-size:9px;color:#3b78cf;white-space:nowrap;">車両編集</div>
<div style="position:absolute;left:609px;top:411.80px;height:13px;line-height:13px;font-size:9px;color:#3b78cf;white-space:nowrap;">整備作成</div>
<div style="position:absolute;left:656px;top:411.80px;height:13px;line-height:13px;font-size:9px;color:#3b78cf;white-space:nowrap;">整備履歴1件</div>
<svg style="position:absolute;left:710px;top:414.0px" width="9.4" height="8.4" viewBox="0 0 10 9"><ellipse cx="5.2" cy="4" rx="4.1" ry="3.2" fill="none" stroke="#3b78cf" stroke-width="1.1"/><path d="M2 6 L1.2 8.6 L4 7.2" fill="#3b78cf"/></svg>
<svg style="position:absolute;left:730px;top:413.40000000000003px" width="8" height="8" viewBox="0 0 9 9"><path d="M7.6 5.2 V8.3 H0.8 V1.5 H4" fill="none" stroke="#3b78cf" stroke-width="1.3"/><path d="M5.2 0.4 H8.6 V3.8Z" fill="#3b78cf"/><path d="M8 1 L3.6 5.4" fill="none" stroke="#3b78cf" stroke-width="1.3"/></svg>
<div style="position:absolute;left:741.5px;top:411.90px;height:12.8px;line-height:12.8px;font-size:8.8px;color:#3b78cf;white-space:nowrap;">リコール照会</div>
<div style="position:absolute;left:395px;top:452.5px;width:608.5px;height:1px;background:#f0f0f0"></div>
<div style="position:absolute;left:395px;top:472px;width:608.5px;height:1px;background:#f0f0f0"></div>
<div style="position:absolute;left:395px;top:434px;width:608.5px;height:1px;background:#f0f0f0"></div>
<div style="position:absolute;left:395px;top:434px;width:1px;height:38px;background:#f0f0f0"></div>
<div style="position:absolute;left:423px;top:434px;width:1px;height:38px;background:#f0f0f0"></div>
<div style="position:absolute;left:534px;top:434px;width:1px;height:38px;background:#f0f0f0"></div>
<div style="position:absolute;left:682px;top:434px;width:1px;height:38px;background:#f0f0f0"></div>
<div style="position:absolute;left:785px;top:434px;width:1px;height:38px;background:#f0f0f0"></div>
<div style="position:absolute;left:901px;top:434px;width:1px;height:38px;background:#f0f0f0"></div>
<div style="position:absolute;left:1002.5px;top:434px;width:1px;height:38px;background:#f0f0f0"></div>
<div style="position:absolute;left:608px;top:434px;width:1px;height:18.5px;background:#f0f0f0"></div>
<div style="position:absolute;left:398px;top:437.5px;width:11px;height:11px;background:#fff;border:1px solid #8a8a8a;box-sizing:border-box;border-radius:2.5px"></div>
<div style="position:absolute;left:427px;top:436.00px;height:13px;line-height:13px;font-size:9px;color:#333;white-space:nowrap;">エスティマハイブリッド</div>
<div style="position:absolute;left:537px;top:436.00px;height:13px;line-height:13px;font-size:9px;color:#333;white-space:nowrap;">平成30年4月</div>
<div style="position:absolute;left:611px;top:436.00px;height:13px;line-height:13px;font-size:9px;color:#333;white-space:nowrap;">12ヶ月</div>
<div style="position:absolute;left:685px;top:436.00px;height:13px;line-height:13px;font-size:9px;color:#333;white-space:nowrap;">車検残197日</div>
<svg style="position:absolute;left:773px;top:437.5px" width="8" height="9" viewBox="0 0 8 9"><rect x="0.55" y="1.55" width="6.9" height="6.9" rx="0.8" fill="none" stroke="#2a2a2a" stroke-width="1.1"/><rect x="0.55" y="1.55" width="6.9" height="1.8" fill="#2a2a2a"/><rect x="1.8" y="0" width="1" height="2" fill="#2a2a2a"/><rect x="5.2" y="0" width="1" height="2" fill="#2a2a2a"/><rect x="1.6" y="4.5" width="4.8" height="0.7" fill="#777"/><rect x="1.6" y="6.2" width="4.8" height="0.7" fill="#777"/><rect x="3.6" y="4" width="0.7" height="3.5" fill="#777"/></svg>
<div style="position:absolute;left:788px;top:436.00px;height:13px;line-height:13px;font-size:9px;color:#333;white-space:nowrap;">-</div>
<div style="position:absolute;left:904px;top:435.7px;width:97px;height:17px;background:#fff;border:1px solid #f0f0f0;box-sizing:border-box;border-radius:2px"><div style="position:absolute;left:4px;top:0;line-height:15px;font-size:9px;color:#555;white-space:nowrap">-</div><svg style="position:absolute;left:87px;top:5.0px" width="7" height="4.5" viewBox="0 0 10 6"><path d="M1.3 1.3 L5 4.6 L8.7 1.3" fill="none" stroke="#555" stroke-width="1.6"/></svg></div>
<div style="position:absolute;left:427px;top:454.45px;height:13.5px;line-height:13.5px;font-size:9.5px;color:#333;white-space:nowrap;">大阪550き678</div>
<div style="position:absolute;left:537px;top:454.45px;height:13.5px;line-height:13.5px;font-size:9.5px;color:#333;white-space:nowrap;">L275S-234567</div>
<div style="position:absolute;left:685px;top:454.45px;height:13.5px;line-height:13.5px;font-size:9.5px;color:#333;white-space:nowrap;">DBA-L275S</div>
<div style="position:absolute;left:788px;top:454.70px;height:13px;line-height:13px;font-size:9px;color:#333;white-space:nowrap;">-</div>
<div style="position:absolute;left:562px;top:474.80px;height:13px;line-height:13px;font-size:9px;color:#3b78cf;white-space:nowrap;">車両編集</div>
<div style="position:absolute;left:609px;top:474.80px;height:13px;line-height:13px;font-size:9px;color:#3b78cf;white-space:nowrap;">整備作成</div>
<div style="position:absolute;left:656px;top:474.80px;height:13px;line-height:13px;font-size:9px;color:#3b78cf;white-space:nowrap;">整備履歴1件</div>
<svg style="position:absolute;left:710px;top:477.0px" width="9.4" height="8.4" viewBox="0 0 10 9"><ellipse cx="5.2" cy="4" rx="4.1" ry="3.2" fill="none" stroke="#3b78cf" stroke-width="1.1"/><path d="M2 6 L1.2 8.6 L4 7.2" fill="#3b78cf"/></svg>
<svg style="position:absolute;left:730px;top:476.40000000000003px" width="8" height="8" viewBox="0 0 9 9"><path d="M7.6 5.2 V8.3 H0.8 V1.5 H4" fill="none" stroke="#777" stroke-width="1.3"/><path d="M5.2 0.4 H8.6 V3.8Z" fill="#777"/><path d="M8 1 L3.6 5.4" fill="none" stroke="#777" stroke-width="1.3"/></svg>
<div style="position:absolute;left:741.5px;top:474.90px;height:12.8px;line-height:12.8px;font-size:8.8px;color:#777;white-space:nowrap;">リコール照会</div>
<div style="position:absolute;left:395px;top:515.5px;width:608.5px;height:1px;background:#f0f0f0"></div>
<div style="position:absolute;left:395px;top:535px;width:608.5px;height:1px;background:#f0f0f0"></div>
<div style="position:absolute;left:395px;top:497px;width:608.5px;height:1px;background:#f0f0f0"></div>
<div style="position:absolute;left:395px;top:497px;width:1px;height:38px;background:#f0f0f0"></div>
<div style="position:absolute;left:423px;top:497px;width:1px;height:38px;background:#f0f0f0"></div>
<div style="position:absolute;left:534px;top:497px;width:1px;height:38px;background:#f0f0f0"></div>
<div style="position:absolute;left:682px;top:497px;width:1px;height:38px;background:#f0f0f0"></div>
<div style="position:absolute;left:785px;top:497px;width:1px;height:38px;background:#f0f0f0"></div>
<div style="position:absolute;left:901px;top:497px;width:1px;height:38px;background:#f0f0f0"></div>
<div style="position:absolute;left:1002.5px;top:497px;width:1px;height:38px;background:#f0f0f0"></div>
<div style="position:absolute;left:608px;top:497px;width:1px;height:18.5px;background:#f0f0f0"></div>
<div style="position:absolute;left:398px;top:500.5px;width:11px;height:11px;background:#fff;border:1px solid #8a8a8a;box-sizing:border-box;border-radius:2.5px"></div>
<div style="position:absolute;left:427px;top:499.00px;height:13px;line-height:13px;font-size:9px;color:#333;white-space:nowrap;">アクア</div>
<div style="position:absolute;left:537px;top:499.00px;height:13px;line-height:13px;font-size:9px;color:#333;white-space:nowrap;">令和5年1月</div>
<div style="position:absolute;left:611px;top:499.00px;height:13px;line-height:13px;font-size:9px;color:#333;white-space:nowrap;">12ヶ月</div>
<div style="position:absolute;left:685px;top:499.00px;height:13px;line-height:13px;font-size:9px;color:#333;white-space:nowrap;">車検残505日</div>
<svg style="position:absolute;left:773px;top:500.5px" width="8" height="9" viewBox="0 0 8 9"><rect x="0.55" y="1.55" width="6.9" height="6.9" rx="0.8" fill="none" stroke="#2a2a2a" stroke-width="1.1"/><rect x="0.55" y="1.55" width="6.9" height="1.8" fill="#2a2a2a"/><rect x="1.8" y="0" width="1" height="2" fill="#2a2a2a"/><rect x="5.2" y="0" width="1" height="2" fill="#2a2a2a"/><rect x="1.6" y="4.5" width="4.8" height="0.7" fill="#777"/><rect x="1.6" y="6.2" width="4.8" height="0.7" fill="#777"/><rect x="3.6" y="4" width="0.7" height="3.5" fill="#777"/></svg>
<div style="position:absolute;left:788px;top:499.00px;height:13px;line-height:13px;font-size:9px;color:#333;white-space:nowrap;">-</div>
<div style="position:absolute;left:904px;top:498.7px;width:97px;height:17px;background:#fff;border:1px solid #f0f0f0;box-sizing:border-box;border-radius:2px"><div style="position:absolute;left:4px;top:0;line-height:15px;font-size:9px;color:#555;white-space:nowrap">-</div><svg style="position:absolute;left:87px;top:5.0px" width="7" height="4.5" viewBox="0 0 10 6"><path d="M1.3 1.3 L5 4.6 L8.7 1.3" fill="none" stroke="#555" stroke-width="1.6"/></svg></div>
<div style="position:absolute;left:427px;top:517.45px;height:13.5px;line-height:13.5px;font-size:9.5px;color:#333;white-space:nowrap;">横浜411お9010</div>
<div style="position:absolute;left:537px;top:517.45px;height:13.5px;line-height:13.5px;font-size:9.5px;color:#333;white-space:nowrap;">NHP10-12345679</div>
<div style="position:absolute;left:685px;top:517.45px;height:13.5px;line-height:13.5px;font-size:9.5px;color:#333;white-space:nowrap;">DAA-NHP10</div>
<div style="position:absolute;left:788px;top:517.70px;height:13px;line-height:13px;font-size:9px;color:#333;white-space:nowrap;">-</div>
<div style="position:absolute;left:562px;top:537.80px;height:13px;line-height:13px;font-size:9px;color:#3b78cf;white-space:nowrap;">車両編集</div>
<div style="position:absolute;left:609px;top:537.80px;height:13px;line-height:13px;font-size:9px;color:#3b78cf;white-space:nowrap;">整備作成</div>
<div style="position:absolute;left:656px;top:537.80px;height:13px;line-height:13px;font-size:9px;color:#3b78cf;white-space:nowrap;">整備履歴1件</div>
<svg style="position:absolute;left:710px;top:540.0px" width="9.4" height="8.4" viewBox="0 0 10 9"><ellipse cx="5.2" cy="4" rx="4.1" ry="3.2" fill="none" stroke="#3b78cf" stroke-width="1.1"/><path d="M2 6 L1.2 8.6 L4 7.2" fill="#3b78cf"/></svg>
<svg style="position:absolute;left:730px;top:539.4px" width="8" height="8" viewBox="0 0 9 9"><path d="M7.6 5.2 V8.3 H0.8 V1.5 H4" fill="none" stroke="#3b78cf" stroke-width="1.3"/><path d="M5.2 0.4 H8.6 V3.8Z" fill="#3b78cf"/><path d="M8 1 L3.6 5.4" fill="none" stroke="#3b78cf" stroke-width="1.3"/></svg>
<div style="position:absolute;left:741.5px;top:537.90px;height:12.8px;line-height:12.8px;font-size:8.8px;color:#3b78cf;white-space:nowrap;">リコール照会</div>
<svg style="position:absolute;left:0;top:540px" width="14" height="14" viewBox="0 0 14 14"><path d="M0 0 V14 H14 A14 14 0 0 1 0 0Z" fill="#1c1d1c"/></svg>
<svg style="position:absolute;left:1010px;top:540px" width="14" height="14" viewBox="0 0 14 14"><path d="M14 0 V14 H0 A14 14 0 0 0 14 0Z" fill="#1c1d1c"/></svg>
</div></body></html>
